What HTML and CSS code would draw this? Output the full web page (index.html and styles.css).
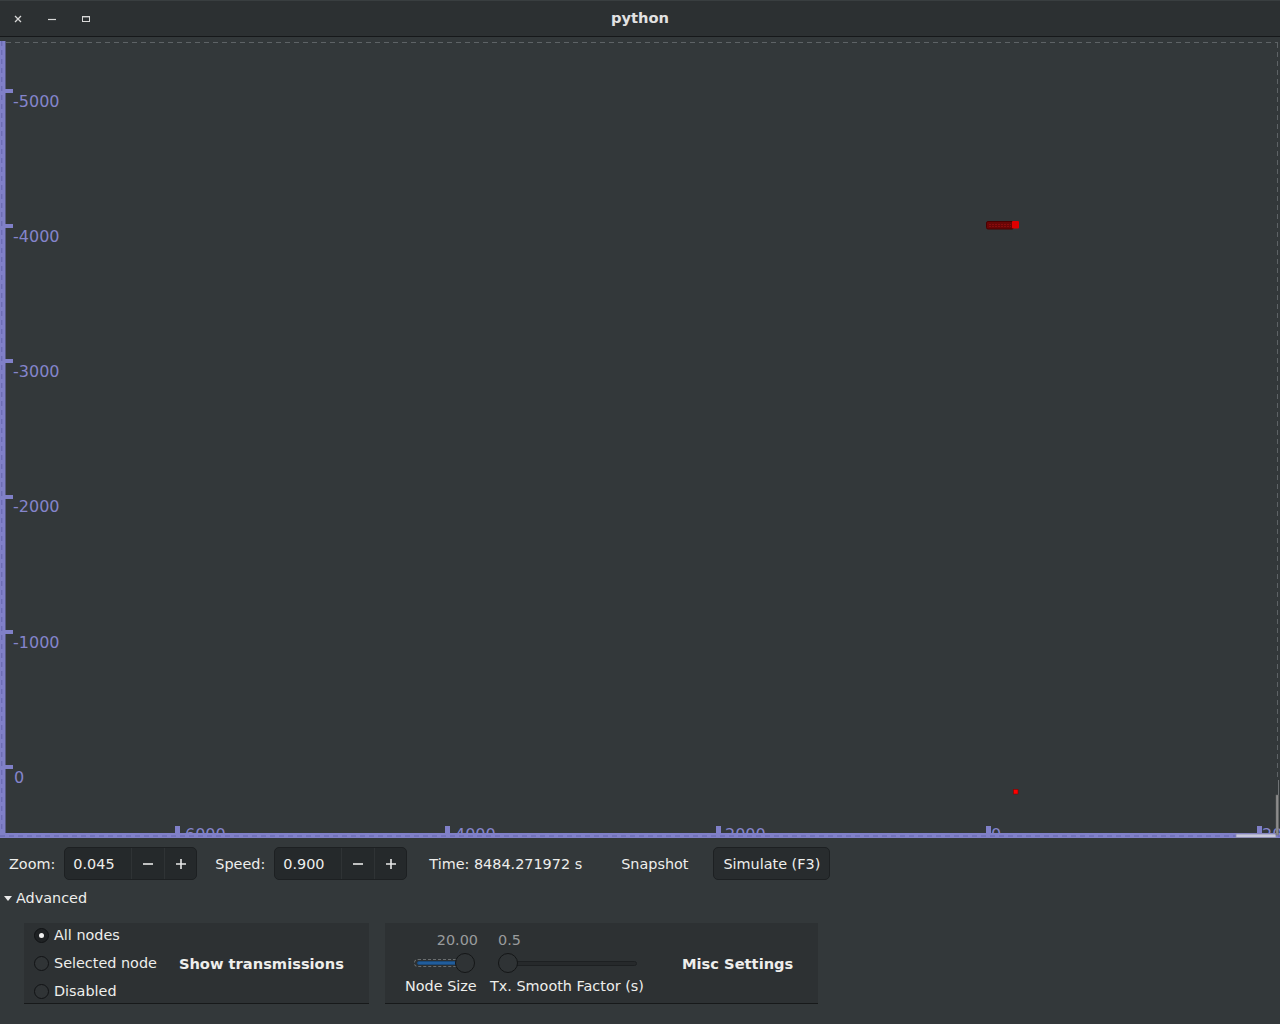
FILE: index.html
```html
<!DOCTYPE html>
<html>
<head>
<meta charset="utf-8">
<title>python</title>
<link rel="stylesheet" href="styles.css">
</head>
<body>
<header class="titlebar">
  <div class="wm-buttons">
    <span class="wm-btn"><svg width="10" height="10" viewBox="0 0 10 10"><path d="M2 2 L8 8 M8 2 L2 8" stroke="#d8d8d8" stroke-width="1.3" fill="none"/></svg></span>
    <span class="wm-btn"><svg width="10" height="10" viewBox="0 0 10 10"><path d="M1 5.5 H9" stroke="#d8d8d8" stroke-width="1.2" fill="none"/></svg></span>
    <span class="wm-btn"><svg width="10" height="10" viewBox="0 0 10 10"><rect x="1.5" y="2.5" width="7" height="5" stroke="#d8d8d8" stroke-width="1" fill="none"/><path d="M1 2.8 H9" stroke="#d8d8d8" stroke-width="1.2"/></svg></span>
  </div>
  <div class="title">python</div>
  <div></div>
</header>

<main class="canvas">
  <svg class="plot" width="1280" height="801" viewBox="0 0 1280 801">
    <!-- focus dashed frame -->
    <line x1="6" y1="5.5" x2="1278" y2="5.5" stroke="#5e6366" stroke-width="1" stroke-dasharray="5 4"/>
    <line x1="1277.5" y1="6" x2="1277.5" y2="742" stroke="#5e6366" stroke-width="1" stroke-dasharray="5 4"/>

    <!-- node cluster -->
    <rect x="986.5" y="184.5" width="27" height="7.5" fill="#6a0606" stroke="#4a0000" stroke-width="1" rx="1.5"/>
    <path d="M989 187.5 H1011 M989 189.5 H1011" stroke="#8a0c0c" stroke-width="1" stroke-dasharray="2 1"/>
    <rect x="1012" y="184" width="7" height="7.5" fill="#e00000" rx="1"/>
    <rect x="1013.5" y="752.5" width="4.5" height="4.5" fill="#ff0000" stroke="#8a0000" stroke-width="0.6"/>

    <!-- y axis labels -->
    <g class="axis-label">
      <text x="13" y="70">-5000</text>
      <text x="13" y="205">-4000</text>
      <text x="13" y="340">-3000</text>
      <text x="13" y="475">-2000</text>
      <text x="13" y="611">-1000</text>
      <text x="14" y="746">0</text>
    </g>
    <!-- x axis labels (mostly hidden by the axis bar) -->
    <g class="axis-label">
      <text x="185" y="803">6000</text>
      <text x="455" y="803">4000</text>
      <text x="725" y="803">2000</text>
      <text x="991" y="803">0</text>
      <text x="1262" y="803">20</text>
    </g>

    <!-- left ruler -->
    <rect x="0" y="4" width="5.5" height="797" fill="#8080c8"/>
    <line x1="1.8" y1="4" x2="1.8" y2="801" stroke="#6464ac" stroke-width="1" stroke-dasharray="5 4"/>
    <g fill="#8080c8">
      <rect x="5" y="52" width="8" height="4"/>
      <rect x="5" y="187" width="8" height="4"/>
      <rect x="5" y="322" width="8" height="4"/>
      <rect x="5" y="458" width="8" height="4"/>
      <rect x="5" y="593" width="8" height="4"/>
      <rect x="5" y="728" width="8" height="4"/>
    </g>

    <!-- bottom ruler -->
    <rect x="0" y="796" width="1280" height="5" fill="#8080c8"/>
    <line x1="0" y1="799" x2="1280" y2="799" stroke="#6464ac" stroke-width="1" stroke-dasharray="5 4"/>
    <g fill="#8080c8">
      <rect x="175" y="789" width="5" height="7"/>
      <rect x="445" y="789" width="5" height="7"/>
      <rect x="716" y="789" width="5" height="7"/>
      <rect x="986" y="789" width="5" height="7"/>
      <rect x="1257" y="789" width="5" height="7"/>
    </g>

    <!-- scroll markers -->
    <rect x="1236" y="797" width="40" height="3.5" fill="#c8c8dc" stroke="#8a8ab0" stroke-width="0.8"/>
    <rect x="1278" y="743" width="1" height="15" fill="#6f7375"/>
    <rect x="1276" y="758" width="2.5" height="40" fill="#8c8c8c" stroke="#6a6a6a" stroke-width="0.5"/>
  </svg>
</main>

<section class="toolbar">
  <span class="tb-label">Zoom:</span>
  <div class="spin">
    <span class="spin-entry">0.045</span>
    <span class="spin-btn"><svg width="10" height="10" viewBox="0 0 10 10"><path d="M0 5 H10" stroke="#e8e8e8" stroke-width="1.6"/></svg></span>
    <span class="spin-btn"><svg width="10" height="10" viewBox="0 0 10 10"><path d="M0 5 H10 M5 0 V10" stroke="#e8e8e8" stroke-width="1.6"/></svg></span>
  </div>
  <span class="tb-label speed-label">Speed:</span>
  <div class="spin">
    <span class="spin-entry">0.900</span>
    <span class="spin-btn"><svg width="10" height="10" viewBox="0 0 10 10"><path d="M0 5 H10" stroke="#e8e8e8" stroke-width="1.6"/></svg></span>
    <span class="spin-btn"><svg width="10" height="10" viewBox="0 0 10 10"><path d="M0 5 H10 M5 0 V10" stroke="#e8e8e8" stroke-width="1.6"/></svg></span>
  </div>
  <span class="tb-label time-label">Time: 8484.271972 s</span>
  <span class="flat-btn">Snapshot</span>
  <span class="btn">Simulate (F3)</span>
</section>

<div class="expander">
  <svg width="8" height="5" viewBox="0 0 8 5"><polygon points="0,0 8,0 4,5" fill="#e8e8e8"/></svg>
  <span>Advanced</span>
</div>

<section class="panels">
  <div class="panel panel-tx">
    <div class="radios">
      <label class="radio-row"><span class="radio checked"></span><span>All nodes</span></label>
      <label class="radio-row"><span class="radio"></span><span>Selected node</span></label>
      <label class="radio-row"><span class="radio"></span><span>Disabled</span></label>
    </div>
    <span class="panel-title tx-title">Show transmissions</span>
  </div>
  <div class="panel panel-misc">
    <div class="scale-col col-node">
      <div class="scale-value value-right">20.00</div>
      <div class="scale-row">
        <div class="trough trough-focus">
          <div class="fill"></div>
          <span class="knob knob-node"></span>
        </div>
      </div>
      <div class="scale-label">Node Size</div>
    </div>
    <div class="scale-col col-tx">
      <div class="scale-value value-left">0.5</div>
      <div class="scale-row">
        <div class="trough trough-plain">
          <span class="knob knob-tx"></span>
        </div>
      </div>
      <div class="scale-label">Tx. Smooth Factor (s)</div>
    </div>
    <span class="panel-title misc-title">Misc Settings</span>
  </div>
</section>
</body>
</html>
```

FILE: styles.css
```css
* { box-sizing: border-box; }

html, body {
  margin: 0;
  padding: 0;
}

body {
  width: 1280px;
  height: 1024px;
  overflow: hidden;
  background: #33383a;
  font-family: "DejaVu Sans", "Liberation Sans", sans-serif;
  font-size: 14.4px;
  color: #eeeeec;
}

/* ---------- title bar ---------- */
.titlebar {
  height: 37px;
  padding-bottom: 2px;
  background: #2c3032;
  border-top: 1px solid #393e40;
  border-bottom: 1px solid #16181a;
  display: grid;
  grid-template-columns: 1fr auto 1fr;
  align-items: center;
}

.wm-buttons {
  display: flex;
  gap: 10px;
  padding-left: 6px;
  margin-top: 2px;
}

.wm-btn {
  width: 24px;
  height: 24px;
  display: flex;
  align-items: center;
  justify-content: center;
}

.title {
  font-size: 11pt;
  font-weight: bold;
  color: #e2e2e2;
}

/* ---------- canvas ---------- */
.canvas {
  height: 801px;
  background: #33383a;
}

.plot {
  display: block;
}

.axis-label text {
  font-family: "DejaVu Sans", sans-serif;
  font-size: 16px;
  fill: #8585cc;
}

/* ---------- toolbar ---------- */
.toolbar {
  display: flex;
  align-items: center;
  height: 33px;
  margin-top: 9px;
  padding-left: 9px;
}

.tb-label {
  white-space: nowrap;
}

.speed-label { margin-left: 18px; }
.time-label { margin-left: 22px; }

.spin {
  display: flex;
  width: 133px;
  height: 33px;
  margin-left: 9px;
  background: #25292b;
  border: 1px solid #1d2022;
  border-radius: 5px;
}

.spin-entry {
  width: 66px;
  padding-left: 8px;
  display: flex;
  align-items: center;
}

.spin-btn {
  flex: 1;
  display: flex;
  align-items: center;
  justify-content: center;
  border-left: 1px solid #2f3335;
}

.flat-btn {
  height: 33px;
  margin-left: 23px;
  padding: 0 16px;
  display: flex;
  align-items: center;
}

.btn {
  height: 33px;
  margin-left: 9px;
  padding: 0 9px;
  display: flex;
  align-items: center;
  background: #282c2e;
  border: 1px solid #1d2022;
  border-radius: 5px;
}

/* ---------- expander ---------- */
.expander {
  display: flex;
  align-items: center;
  gap: 4px;
  height: 18px;
  margin-top: 9px;
  padding-left: 4px;
}

/* ---------- panels ---------- */
.panels {
  display: flex;
  gap: 16px;
  margin-top: 16px;
  padding-left: 24px;
}

.panel {
  height: 81px;
  background: #2d3133;
  border-bottom: 1px solid #17191a;
  display: flex;
  align-items: center;
}

.panel-tx {
  width: 345px;
  padding-left: 10px;
}

.panel-misc {
  width: 433px;
  padding-left: 20px;
}

.panel-title {
  font-size: 11pt;
  font-weight: bold;
  white-space: nowrap;
}

.tx-title { margin-left: 22px; }
.misc-title { margin-left: 34px; }

.radios {
  display: flex;
  flex-direction: column;
  gap: 4px;
}

.radio-row {
  height: 24px;
  display: flex;
  align-items: center;
  gap: 5px;
  white-space: nowrap;
}

.radio {
  width: 15px;
  height: 15px;
  border-radius: 50%;
  border: 1px solid #111315;
  background: #303436;
  display: flex;
  align-items: center;
  justify-content: center;
}

.radio.checked {
  background: #1f2224;
}

.radio.checked::after {
  content: "";
  width: 5px;
  height: 5px;
  border-radius: 50%;
  background: #f0f0f0;
}

/* scales */
.scale-col {
  display: flex;
  flex-direction: column;
}

.col-node { width: 73px; }
.col-tx { width: 158px; margin-left: 12px; }

.scale-value {
  height: 23px;
  line-height: 23px;
  color: #9a9c9d;
}

.value-right { text-align: right; }
.value-left { padding-left: 8px; }

.scale-row {
  height: 23px;
  display: flex;
  align-items: center;
}

.scale-label {
  height: 23px;
  line-height: 23px;
  white-space: nowrap;
}

.trough {
  position: relative;
}

.trough-focus {
  margin-left: 9px;
  width: 56px;
  height: 8px;
  border: 1px dashed #6a6e70;
  border-radius: 4px;
  padding: 1px 2px;
}

.fill {
  width: 40px;
  height: 4px;
  border-radius: 2px;
  background: #215d9c;
  border: 1px solid #1a4a7c;
}

.trough-plain {
  margin-left: 8px;
  width: 139px;
  height: 5px;
  background: #26292b;
  border: 1px solid #1d2022;
  border-radius: 3px;
}

.knob {
  position: absolute;
  top: 50%;
  width: 20px;
  height: 20px;
  margin-top: -10px;
  border-radius: 50%;
  background: #2f3335;
  border: 1px solid #141617;
}

.knob-node { left: 40px; }
.knob-tx { left: -1px; }
```
